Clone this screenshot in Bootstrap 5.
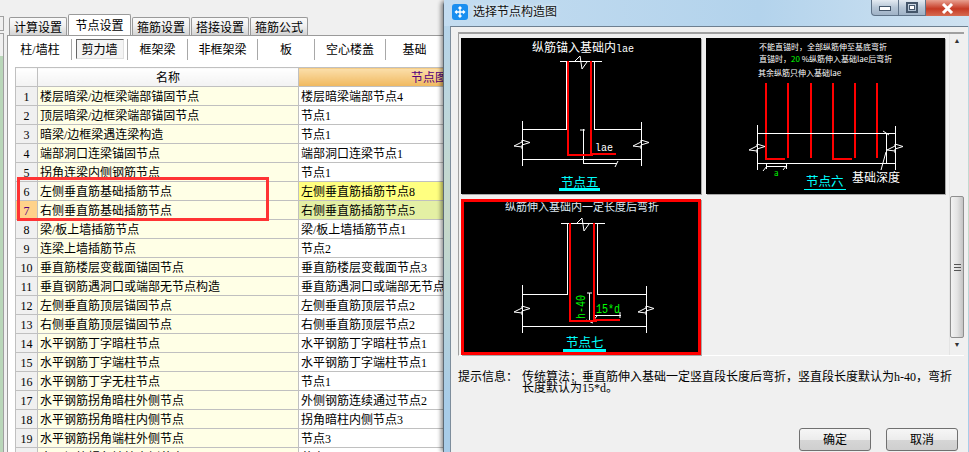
<!DOCTYPE html>
<html lang="zh">
<head>
    <meta charset="UTF-8">
    <meta name="viewport" content="width=device-width, initial-scale=1.0">
    <title>选择节点构造图</title>
    <link href="https://cdn.jsdelivr.net/npm/bootstrap@5.3.0/dist/css/bootstrap.min.css" rel="stylesheet">
    <style>
        html, body { height: 452px; overflow: hidden; }
        body {
            background: #f0f0f0;
            color: #000;
            font: 12px/1 "Liberation Serif", "Noto Sans CJK SC", serif;
        }
        .screen { width: 969px; height: 452px; overflow: hidden; }

        /* left window */
        .left-win { width: 443px; height: 452px; flex: none; overflow: hidden; position: relative; background: #f0f0f0; }
        .edge-strip { width: 9px; flex: none; padding-top: 16px; }
        .edge-box { width: 4px; height: 15px; border: 1px solid #a0a0a0; border-left: 0; }
        .edge-side { width: 4px; height: 420px; margin-top: 2px; border-right: 1px solid #a0a0a0; border-top: 1px solid #a0a0a0; }
        .edge-side div { width: 3px; height: 396px; margin-top: 22px; background: #b9d6b9; }
        .left-main { width: 434px; flex: none; }

        .main-tabs { height: 20px; margin-top: 15px; border: 0; flex-wrap: nowrap; align-items: flex-end; }
        .main-tabs .nav-link {
            height: 18px; width: 58px; padding: 4px 0 0; margin: 0 1px 0 0;
            text-align: center; color: #000;
            border: 1px solid #9a9a9a; border-bottom: 0; border-radius: 2px 2px 0 0;
            background: linear-gradient(#fafafa, #f0f0f0 45%, #d4d4d4);
        }
        .main-tabs .nav-link.active {
            height: 21px; width: 63px; padding-top: 5px;
            background: #fff; border-color: #9a9a9a; position: relative; z-index: 2;
        }
        .tab-body {
            width: 445px; height: 420px; margin-left: -2px;
            background: #fff; border-left: 1px solid #9a9a9a; border-top: 1px solid #9a9a9a;
            padding: 3px 0 0 1px;
        }
        .sub-tabs { height: 22px; flex-wrap: nowrap; }
        .sub-tabs .nav-link {
            padding: 2px 0 0; color: #000; height: 21px; line-height: 19px; text-align: center;
            border-right: 1px solid #a8a8a8; border-radius: 0;
        }
        .sub-tabs .nav-item:nth-child(1) .nav-link { width: 63px; }
        .sub-tabs .nav-item:nth-child(2) .nav-link { width: 56px; }
        .sub-tabs .nav-item:nth-child(3) .nav-link { width: 60px; }
        .sub-tabs .nav-item:nth-child(4) .nav-link { width: 70px; }
        .sub-tabs .nav-item:nth-child(5) .nav-link { width: 57px; }
        .sub-tabs .nav-item:nth-child(6) .nav-link { width: 71px; }
        .sub-tabs .nav-item:nth-child(7) .nav-link { width: 57px; border-right: 0; }
        .sub-tabs .nav-link.pressed { position: relative; z-index: 0; }
        .sub-tabs .nav-link.pressed::before {
            content: ""; position: absolute; left: 4px; right: 3px; top: 0; bottom: 1px;
            border: 1px solid #e0e0e0; border-top-color: #666; border-left-color: #666; background: #f4f4f4; z-index: -1;
        }

        .grid-wrap { margin: 6px 0 0 6px; width: 428px; }
        .node-table {
            table-layout: fixed; width: 428px; margin: 0;
            border-collapse: collapse; border: 1px solid #c0c0c0; border-right: 0;
        }
        .node-table > * > tr > * {
            height: 19px; padding: 2px 2px 0; line-height: 16px; font-weight: 400; color: #000;
            border: 1px solid #c0c0c0; border-top: 0; white-space: nowrap; overflow: hidden;
            box-shadow: none; background: transparent;
        }
        .node-table > thead > tr > * { text-align: center; background: linear-gradient(#fff, #f2f2f2); }
        .node-table > thead > tr > .hd-active {
            text-align: left; padding-left: 112px; color: #54007c; border-right: 0;
            background: linear-gradient(#fbdfab, #f0b85e);
        }
        .node-table > tbody > tr > .num { text-align: center; background: #f0f0f0; padding: 2px 0 0; }
        .node-table > tbody > tr > .num-active { background: #ffd28a; color: #54007c; }
        .node-table > tbody > tr > .nm { background: #ffffe6; }
        .node-table > tbody > tr > .vl { background: #fff; border-right: 0; }
        .node-table > tbody > tr > .vl-yellow { background: #ffff80; }
        .node-table > tbody > tr > .vl-green { background: #e4f0a4; }
        .mark-box { position: absolute; left: 17px; top: 177px; width: 252px; height: 44px; border: 3px solid #ff3434; }

        /* dialog */
        .dlg {
            width: 526px; height: 452px; flex: none; position: relative; z-index: 5;
            border-radius: 5px 0 0 0; border-left: 1px solid #5d6a75;
            box-shadow: -2px 0 4px rgba(0, 0, 0, .45);
            background: linear-gradient(180deg, #c4dbee 0, #b6d4ea 25px, #c7d9c9 220px, #a8cce8 400px);
        }
        .dlg-title { height: 26px; flex: none; padding-left: 8px; background: linear-gradient(90deg, #c3dcf0, #b3d3ec 60%, #cfe2f1); font-size: 12px; }
        .dlg-icon { width: 16px; height: 16px; border-radius: 3px; background: #1a8ff0; margin-top: -3px; }
        .dlg-name { margin-left: 5px; margin-top: -3px; color: #111; text-shadow: 0 0 4px #fff; }
        .win-btns { height: 16px; align-self: flex-start; }
        .win-b {
            height: 16px; border: 1px solid #5f7388; border-top: 0; border-left-width: 0;
            background: linear-gradient(#e4ebf2, #b6c6d6 50%, #9fb2c6);
        }
        .win-min { width: 28px; border-left-width: 1px; border-radius: 0 0 0 4px; }
        .win-max { width: 27px; }
        .win-close { width: 43px; border: 0; background: linear-gradient(#e8a090, #c63a24 55%, #d66a50); }
        .dlg-body { width: 518px; height: 426px; margin-left: 6px; background: #f0f0f0; border-top: 1px solid #6d7f90; border-left: 1px solid #7d8d9c; padding: 5px 5px 1px 7px; }
        .pic-pane { width: 506px; height: 324px; flex: none; border-top: 2px solid #a0a0a0; border-left: 1px solid #a0a0a0; border-bottom: 1px solid #fff; }
        .pic-list { width: 490px; flex: none; padding: 4px 0 0 2px; display: grid; grid-template-columns: 240px 239px; grid-auto-rows: 156px; column-gap: 5px; row-gap: 5px; }
        .pic-list svg { display: block; background: #000; box-shadow: 1px 1px 0 #a8a8a8; }
        .scroll-rail { width: 15px; flex: none; background: #f0f0f0; border-left: 1px solid #e4e4e4; }
        .scroll-up, .scroll-dn { height: 14px; color: #333; font-size: 7px; line-height: 14px; text-align: center; }
        .scroll-gap { height: 148px; }
        .scroll-thumb {
            height: 142px; border: 1px solid #8f8f8f; border-radius: 2px;
            background: linear-gradient(90deg, #f2f2f2, #e4e4e4 50%, #c4c4c4);
        }
        .scroll-grip { width: 7px; height: 7px; border-top: 1px solid #555; border-bottom: 1px solid #555; position: relative; }
        .scroll-grip::after { content: ""; position: absolute; left: 0; right: 0; top: 2px; height: 1px; background: #555; }
        .tip-row { margin-top: 16px; line-height: 11px; }
        .tip-label { width: 64px; flex: none; }
        .tip-text { width: 435px; flex: none; }
        .dlg-foot { margin-top: auto; padding-right: 5px; gap: 15px; }
        .win-btn {
            width: 72px; height: 23px; padding: 0; font-size: 12px; color: #000;
            border: 1px solid #707070; border-radius: 3px;
            background: linear-gradient(#f6f6f6, #ececec 50%, #d6d6d6 52%, #cfcfcf);
        }
        svg text { font-family: "Noto Sans CJK SC", sans-serif; }
        svg .mono { font-family: "Liberation Mono", "Noto Sans CJK SC", monospace; }
        .ln { fill: none; stroke: #fff; stroke-width: 1; }
        .rb { fill: none; stroke: #f00; stroke-width: 2; }
        .wt { fill: #fff; }
        .cy { fill: #0ff; }
        .gn { fill: #0f0; }
    </style>
</head>
<body>
<div class="screen d-flex">
    <div class="left-win d-flex">
        <div class="edge-strip">
            <div class="edge-box"></div>
            <div class="edge-side"><div></div></div>
        </div>
        <div class="left-main">
            <ul class="nav nav-tabs main-tabs">
                <li class="nav-item"><a class="nav-link" href="#">计算设置</a></li>
                <li class="nav-item"><a class="nav-link active" href="#">节点设置</a></li>
                <li class="nav-item"><a class="nav-link" href="#">箍筋设置</a></li>
                <li class="nav-item"><a class="nav-link" href="#">搭接设置</a></li>
                <li class="nav-item"><a class="nav-link" href="#">箍筋公式</a></li>
            </ul>
            <div class="tab-body">
                <ul class="nav sub-tabs">
                    <li class="nav-item"><a class="nav-link" href="#">柱/墙柱</a></li>
                    <li class="nav-item"><a class="nav-link pressed" href="#">剪力墙</a></li>
                    <li class="nav-item"><a class="nav-link" href="#">框架梁</a></li>
                    <li class="nav-item"><a class="nav-link" href="#">非框架梁</a></li>
                    <li class="nav-item"><a class="nav-link" href="#">板</a></li>
                    <li class="nav-item"><a class="nav-link" href="#">空心楼盖</a></li>
                    <li class="nav-item"><a class="nav-link" href="#">基础</a></li>
                </ul>
                <div class="grid-wrap">
                    <table class="table node-table">
                        <colgroup><col width="22"><col width="261"><col width="145"></colgroup>
                        <thead><tr><th></th><th>名称</th><th class="hd-active">节点图</th></tr></thead>
                        <tbody id="node-rows"></tbody>
                    </table>
                </div>
            </div>
        </div>
        <div class="mark-box"></div>
    </div>

    <div class="dlg d-flex flex-column">
        <div class="dlg-title d-flex align-items-center">
            <span class="dlg-icon d-flex align-items-center justify-content-center">
                <svg width="12" height="12" viewBox="0 0 12 12"><path d="M6 1v10M1.500 6h9M4.500 2.500 6 1l1.500 1.500M4.500 9.500 6 11l1.500-1.500M3 4.500 1.500 6 3 7.500M9 4.500 10.500 6 9 7.500" fill="none" stroke="#fff" stroke-width="1.400"/></svg>
            </span>
            <span class="dlg-name">选择节点构造图</span>
            <div class="win-btns d-flex ms-auto">
                <div class="win-b win-min d-flex align-items-center justify-content-center">
                    <svg width="12" height="8" viewBox="0 0 12 8"><rect x=".5" y="2.500" width="11" height="4" fill="#fff" stroke="#44566a"/></svg>
                </div>
                <div class="win-b win-max d-flex align-items-center justify-content-center">
                    <svg width="12" height="11" viewBox="0 0 12 11"><rect x="1" y="1" width="10" height="9" fill="none" stroke="#44566a" stroke-width="2"/><rect x="3.500" y="3.500" width="5" height="4" fill="#fff" stroke="#44566a"/></svg>
                </div>
                <div class="win-b win-close d-flex align-items-center justify-content-center">
                    <svg width="13" height="11" viewBox="0 0 13 11"><path d="M2 1l9 9M11 1l-9 9" stroke="#fff" stroke-width="3"/></svg>
                </div>
            </div>
        </div>
        <div class="dlg-body d-flex flex-column">
            <div class="pic-pane d-flex">
                <div class="pic-list">
                    <svg width="240" height="156" viewBox="1 3 240 156">
                        <defs>
                            <path id="brk" d="M-8 5 0 1V-1L8 1.500 0 4V8M-8 5 0 6" fill="none" stroke="#fff"/>
                            <path id="brk-top" d="M-5 0 0-5 2 8 7 1" fill="none" stroke="#fff"/>
                        </defs>
                        <text x="72" y="17" font-size="12" class="wt">纵筋锚入基础内<tspan class="mono" font-size="10">lae</tspan></text>
                        <path class="ln" shape-rendering="crispEdges" d="M100 26.500H142M106 26V94.500H62M134 26V94.500H181.500M62 124.500H181.500M62 86V131M181.500 87V131M123.500 94V128.500H157"/>
                        <use href="#brk-top" x="120" y="26"/>
                        <use href="#brk" x="62" y="106"/>
                        <use href="#brk" x="181" y="106"/>
                        <path class="ln" d="M120 95h5M155 132l3-6"/>
                        <path class="rb" shape-rendering="crispEdges" d="M108 26V119.500H133M131 26V118.500H155.500"/>
                        <text x="135" y="116" font-size="11" textLength="18" lengthAdjust="spacingAndGlyphs" class="wt mono">lae</text>
                        <text x="101" y="152" font-size="12.500" class="cy">节点五</text>
                        <rect x="99" y="153" width="41" height="3" class="cy"/>
                    </svg>
                    <svg width="239" height="156" viewBox="1 3 239 156">
                        <text x="54" y="15" font-size="8" class="wt">不能直锚时，全部纵筋伸至基底弯折</text>
                        <text x="54" y="27" font-size="8" class="wt">直锚时，<tspan class="gn">20</tspan> %纵筋伸入基础lae后弯折</text>
                        <text x="53" y="41" font-size="8" class="wt">其余纵筋只伸入基础lae</text>
                        <path class="rb" shape-rendering="crispEdges" d="M61 48V123.500H80M82.500 48V123M105.500 48V123M127.500 48V123.500H146.500M150 48V123M172 48V123"/>
                        <path class="ln" shape-rendering="crispEdges" d="M52 98.500H190M52 128.500H190M52 90V135M190 91V135M181.500 98V128M61 131.500H81M61 129V134M81 129V134"/>
                        <path class="ln" d="M58 136l4-5M78 135l4-5M178 96l6 4M176 135l5-18"/>
                        <use href="#brk" x="52" y="110"/>
                        <use href="#brk" x="190" y="110"/>
                        <text x="69" y="141" font-size="8" class="gn">a</text>
                        <text x="101" y="151" font-size="12.500" class="cy">节点六</text>
                        <rect x="99" y="154" width="42" height="1" class="cy"/>
                        <text x="147" y="147" font-size="12" class="wt">基础深度</text>
                    </svg>
                    <svg width="240" height="156" viewBox="1 2 240 156">
                        <text x="45" y="14" font-size="11" fill="#dfe8f0">纵筋伸入基础内一定长度后弯折</text>
                        <path class="ln" shape-rendering="crispEdges" d="M101 26.500H145M107.500 26V97.500H62M137.500 26V97.500H186.500M62 129.500H186.500M62 88V135.500M186.500 89V136M129.500 96V124M134 118.500H161"/>
                        <use href="#brk-top" x="122" y="26"/>
                        <use href="#brk" x="62" y="110"/>
                        <use href="#brk" x="186" y="110"/>
                        <path class="ln" d="M127 96h5M126 123l7 3M132 125l5-6M160 115v6"/>
                        <path class="rb" shape-rendering="crispEdges" d="M110 26V123.500H137M134 26V122.500H160"/>
                        <text x="136" y="116" font-size="12" textLength="24" lengthAdjust="spacingAndGlyphs" class="gn mono">15*d</text>
                        <text transform="translate(125 122) rotate(-90)" font-size="12" textLength="24" lengthAdjust="spacingAndGlyphs" class="gn mono">h-40</text>
                        <text x="106" y="150" font-size="12.500" class="cy">节点七</text>
                        <rect x="103" y="152" width="43" height="3" class="cy"/>
                        <rect x="2.500" y="3.500" width="237" height="153" fill="none" stroke="#f00" stroke-width="3"/>
                    </svg>
                </div>
                <div class="scroll-rail d-flex flex-column">
                    <div class="scroll-up">▲</div>
                    <div class="scroll-gap"></div>
                    <div class="scroll-thumb d-flex align-items-center justify-content-center"><div class="scroll-grip"></div></div>
                    <div class="scroll-dn">▼</div>
                </div>
            </div>
            <div class="tip-row d-flex">
                <div class="tip-label">提示信息：</div>
                <div class="tip-text">传统算法：垂直筋伸入基础一定竖直段长度后弯折，竖直段长度默认为h-40，弯折长度默认为15*d。</div>
            </div>
            <div class="dlg-foot d-flex justify-content-end">
                <button type="button" class="btn win-btn">确定</button>
                <button type="button" class="btn win-btn">取消</button>
            </div>
        </div>
    </div>
</div>
<script>
    const rows = [
        ["楼层暗梁/边框梁端部锚固节点", "楼层暗梁端部节点4"],
        ["顶层暗梁/边框梁端部锚固节点", "节点1"],
        ["暗梁/边框梁遇连梁构造", "节点1"],
        ["端部洞口连梁锚固节点", "端部洞口连梁节点1"],
        ["拐角连梁内侧钢筋节点", "节点1"],
        ["左侧垂直筋基础插筋节点", "左侧垂直筋插筋节点8"],
        ["右侧垂直筋基础插筋节点", "右侧垂直筋插筋节点5"],
        ["梁/板上墙插筋节点", "梁/板上墙插筋节点1"],
        ["连梁上墙插筋节点", "节点2"],
        ["垂直筋楼层变截面锚固节点", "垂直筋楼层变截面节点3"],
        ["垂直钢筋遇洞口或端部无节点构造", "垂直筋遇洞口或端部无节点构造"],
        ["左侧垂直筋顶层锚固节点", "左侧垂直筋顶层节点2"],
        ["右侧垂直筋顶层锚固节点", "右侧垂直筋顶层节点2"],
        ["水平钢筋丁字暗柱节点", "水平钢筋丁字暗柱节点1"],
        ["水平钢筋丁字端柱节点", "水平钢筋丁字端柱节点1"],
        ["水平钢筋丁字无柱节点", "节点1"],
        ["水平钢筋拐角暗柱外侧节点", "外侧钢筋连续通过节点2"],
        ["水平钢筋拐角暗柱内侧节点", "拐角暗柱内侧节点3"],
        ["水平钢筋拐角端柱外侧节点", "节点3"],
        ["水平钢筋拐角端柱内侧节点", "节点3"]
    ];
    const body = document.getElementById("node-rows");
    rows.forEach(function (r, i) {
        const tr = document.createElement("tr");
        const numCls = i === 6 ? "num num-active" : "num";
        const valCls = i === 5 ? "vl vl-yellow" : i === 6 ? "vl vl-green" : "vl";
        tr.innerHTML = `<td class="${numCls}">${i + 1}</td><td class="nm">${r[0]}</td><td class="${valCls}">${r[1]}</td>`;
        body.appendChild(tr);
    });
</script>
<script src="https://cdn.jsdelivr.net/npm/bootstrap@5.3.0/dist/js/bootstrap.bundle.min.js"></script>
</body>
</html>
